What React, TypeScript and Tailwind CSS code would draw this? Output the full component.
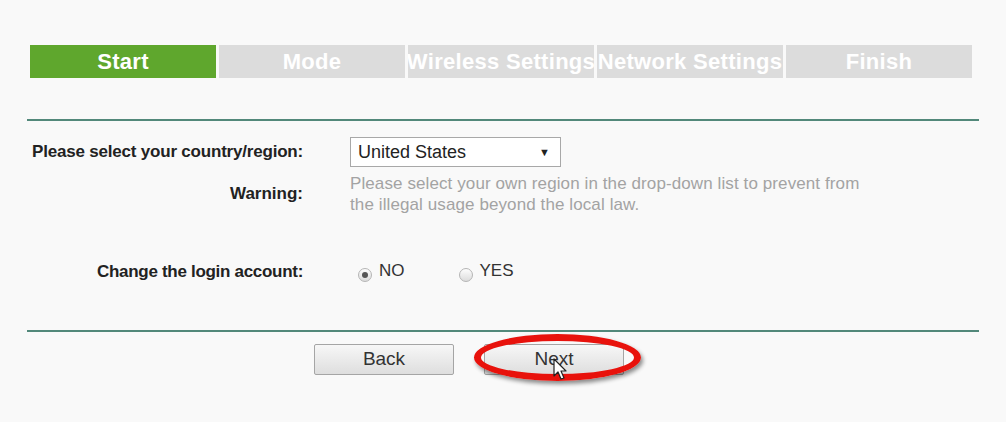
import React from "react";

const steps = ["Start", "Mode", "Wireless Settings", "Network Settings", "Finish"];

function Radio({ checked }: { checked?: boolean }) {
  return (
    <span className="w-[14px] h-[14px] rounded-full border border-[#b5b5b5] bg-gradient-to-b from-[#fdfdfd] to-[#dcdcdc] flex items-center justify-center">
      {checked && <span className="w-[6px] h-[6px] rounded-full bg-[#555]" />}
    </span>
  );
}

export default function App() {
  return (
    <div
      className="relative w-[1006px] h-[422px] overflow-hidden bg-[#f9f9f9] text-[#222]"
      style={{ fontFamily: '"Liberation Sans", Arial, sans-serif' }}
    >
      {/* wizard steps */}
      <div className="ml-[30px] mt-[45px] flex gap-[3px]">
        {steps.map((s, i) => (
          <div
            key={s}
            className={`w-[186px] h-[33px] flex items-center justify-center text-[22px] font-bold text-white whitespace-nowrap overflow-hidden tracking-[0.3px] ${
              i === 0 ? "bg-[#5fa72d]" : "bg-[#dcdcdc]"
            }`}
          >
            {s}
          </div>
        ))}
      </div>

      <div className="ml-[27px] mt-[41px] w-[952px] border-t-2 border-[#52887a]" />

      {/* form */}
      <div className="ml-[27px] mt-[16px] grid grid-cols-[276px_1fr] gap-x-[47px] text-[17px]">
        <div className="h-[30px] flex items-center justify-end font-bold tracking-[-0.2px]">
          Please select your country/region:
        </div>
        <div className="flex items-center">
          <div className="w-[211px] h-[30px] border border-[#a8a8a8] bg-white flex items-center justify-between pl-[7px] pr-[10px] text-[18px] text-[#222]">
            <span>United States</span>
            <span className="text-[11px]">▼</span>
          </div>
        </div>

        <div className="mt-[6px] flex items-center justify-end font-bold">Warning:</div>
        <div className="mt-[6px] text-[17px] leading-[21px] text-[#a3a3a3] w-[560px] tracking-[0.1px]">
          Please select your own region in the drop-down list to prevent from
          <br />
          the illegal usage beyond the local law.
        </div>

        <div className="mt-[45px] h-[24px] flex items-center justify-end font-bold tracking-[-0.3px]">
          Change the login account:
        </div>
        <div className="mt-[45px] h-[24px] flex items-center text-[17px] text-[#333]">
          <span className="ml-[8px] mt-[6px]">
            <Radio checked />
          </span>
          <span className="ml-[7px] -mt-[2px]">NO</span>
          <span className="ml-[54px] mt-[6px]">
            <Radio />
          </span>
          <span className="ml-[7px] -mt-[2px]">YES</span>
        </div>
      </div>

      <div className="ml-[27px] mt-[46px] w-[952px] border-t-2 border-[#52887a]" />

      {/* buttons */}
      <div className="mt-[12px] ml-[314px] flex gap-[30px]">
        {["Back", "Next"].map((b) => (
          <button
            key={b}
            className="w-[140px] h-[31px] rounded-[2px] border border-[#a5a5a5] bg-gradient-to-b from-[#f7f7f7] to-[#dedede] text-[19px] text-[#333] flex items-center justify-center"
          >
            {b}
          </button>
        ))}
      </div>

      {/* red highlight annotation */}
      <div className="absolute left-[474px] top-[334px] w-[167px] h-[47px] rounded-[50%] border-[7px] border-[#e8120c] shadow-[2px_3px_4px_rgba(0,0,0,0.45)]" />

      {/* mouse cursor */}
      <svg className="absolute left-[553px] top-[358px]" width="16" height="24" viewBox="0 0 16 24">
        <path d="M1 1 L1 18 L5 14 L8 21 L11 20 L8 13 L13 13 Z" fill="#fff" stroke="#222" strokeWidth="1.2" strokeLinejoin="round" />
      </svg>
    </div>
  );
}
